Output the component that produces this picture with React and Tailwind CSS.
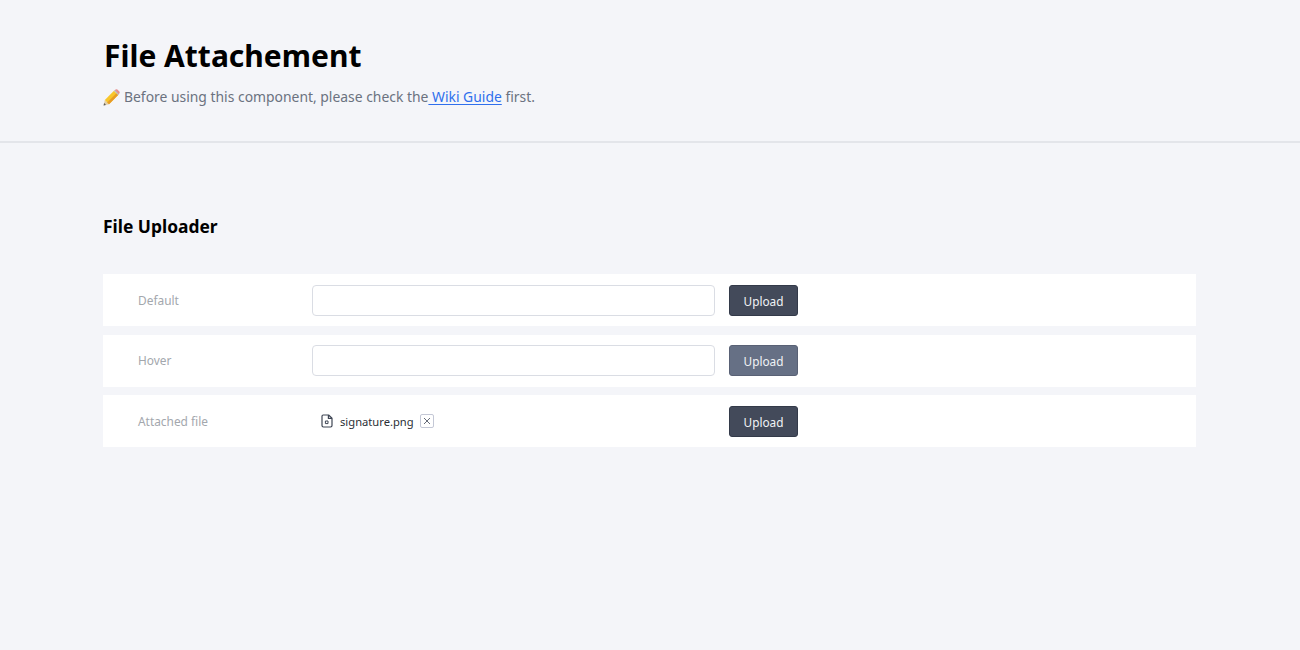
const Pencil = () => (
  <svg width="17" height="17" viewBox="0 0 17 17" className="shrink-0">
    <path d="M0.6 16.4 L1.8 11 L6 15.2 Z" fill="#e3cfa8" />
    <path d="M0.6 16.4 L1.1 14 L3 15.9 Z" fill="#5a5a5a" />
    <path d="M1.8 11 L11 1.8 L15.2 6 L6 15.2 Z" fill="#f8c62c" />
    <path d="M4.2 13.4 L13.4 4.2 L15.2 6 L6 15.2 Z" fill="#e79b26" />
    <path d="M11.6 1.2 L12.6 0.4 Q13.5 -0.1 14.4 0.5 L16.4 2.5 Q17 3.4 16.4 4.3 L15.8 5.4 Z" fill="#e88f8f" />
    <path d="M11 1.8 L11.8 1 L16 5.2 L15.2 6 Z" fill="#b8bcc4" />
  </svg>
);

const FileIcon = () => (
  <svg width="12" height="14" viewBox="0 0 12 14" fill="none" stroke="#3f4654" strokeWidth="1.2" strokeLinejoin="round" className="shrink-0">
    <path d="M2.2 1 H7.6 L11 4.2 V11.6 Q11 13 9.6 13 H2.4 Q1 13 1 11.6 V2.2 Q1 1 2.2 1 Z" />
    <path d="M7.4 1 V4.4 H11" />
    <path d="M4.4 7 H7 V9.6 H4.4 Z" strokeWidth="1" />
  </svg>
);

const Row = ({ label, children, hover }) => (
  <div className="flex h-[52px] items-center bg-white pl-[35px]">
    <div className="w-[174px] pt-px text-[11.9px] text-[#a3a7ad]">{label}</div>
    {children}
    <button className={`ml-[14px] flex h-[31px] w-[69px] items-center justify-center rounded-[3px] border pt-[3px] text-[11.8px] text-[#f1f3f6] ${hover ? "border-[#596175] bg-[#667085]" : "border-[#333a49] bg-[#434a5a]"}`}>
      Upload
    </button>
  </div>
);

const Input = () => (
  <div className="h-[31px] w-[403px] rounded-[4px] border border-[#dadde4] bg-white" />
);

export default function App() {
  return (
    <div className="min-h-[650px] bg-[#f4f5f9] font-['Noto_Sans',sans-serif]">
      <header className="h-[143px] border-b-2 border-[#e3e5ea] pl-[103px] pt-[35px]">
        <h1 className="pl-px text-[30px] font-bold leading-[42px] text-black">File Attachement</h1>
        <p className="mt-[9px] flex items-center text-[13.9px] leading-[22px] text-[#6b7280]">
          <Pencil />
          <span className="ml-[4px] whitespace-pre">
            Before using this component, please check the
            <a className="text-[#2f6fed] underline underline-offset-2"> Wiki Guide</a> first.
          </span>
        </p>
      </header>
      <main className="pl-[103px] pr-[104px] pt-[70px]">
        <h2 className="text-[17.4px] font-bold leading-[26px] text-black">File Uploader</h2>
        <div className="mt-[35px] flex flex-col gap-[8.5px]">
          <Row label="Default"><Input /></Row>
          <Row label="Hover" hover><Input /></Row>
          <Row label="Attached file">
            <div className="mt-px flex w-[403px] items-center pl-[9px]">
              <FileIcon />
              <span className="ml-[7px] pt-px text-[11.2px] text-[#2b2f36]">signature.png</span>
              <span className="ml-[6px] flex h-[14px] w-[14px] items-center justify-center rounded-[2px] border border-[#c4c8d6] text-[#666c78]">
                <svg width="8" height="8" viewBox="0 0 8 8" stroke="currentColor" strokeWidth="1"><path d="M1 1 L7 7 M7 1 L1 7" /></svg>
              </span>
            </div>
          </Row>
        </div>
      </main>
    </div>
  );
}
